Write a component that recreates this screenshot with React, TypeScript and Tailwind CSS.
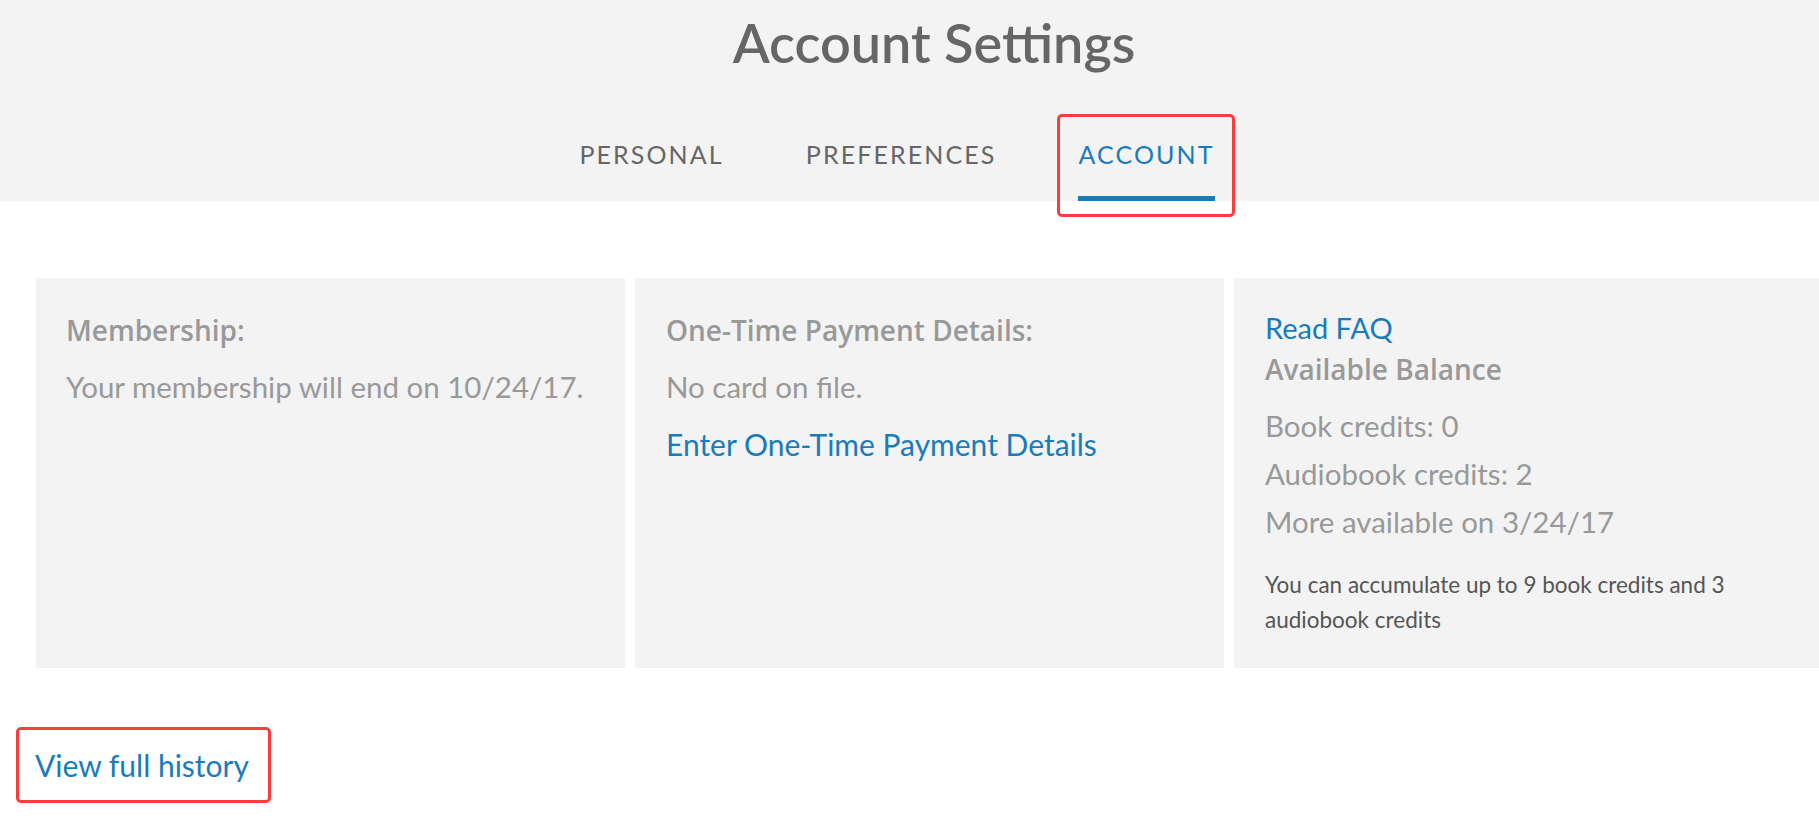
const font = { fontFamily: "Lato, 'Open Sans', sans-serif" };
const headFont = { fontFamily: "'Open Sans', Lato, sans-serif" };

function Tab({ label, active }: { label: string; active?: boolean }) {
  return (
    <div className="relative mr-[82px]">
      <div
        className={
          "pb-[26px] text-[25px] leading-[32px] tracking-[2.1px] border-b-[5px] " +
          (active ? "border-[#1a7bb9] text-[#1a7bb9]" : "border-transparent text-[#666]")
        }
      >
        {label}
      </div>
      {active && (
        <div className="pointer-events-none absolute -top-[24px] -bottom-[16px] -left-[21px] -right-[20px] rounded-[5px] border-[3px] border-[#fb3c3c]" />
      )}
    </div>
  );
}

function Heading({ children, className = "" }: { children: React.ReactNode; className?: string }) {
  return (
    <h2 className={"text-[28px] font-semibold text-[#999] " + className} style={headFont}>
      {children}
    </h2>
  );
}

export default function App() {
  return (
    <div className="min-h-screen w-full overflow-hidden bg-white" style={font}>
      <div className="bg-[#f3f3f3]">
        <div className="w-[1868px]">
          <h1 className="pt-[12px] text-center text-[54px] leading-[62px] font-semibold text-[#666]">
            Account Settings
          </h1>
          <div className="mt-[64px] flex justify-center pl-[8px]">
            <Tab label="PERSONAL" />
            <Tab label="PREFERENCES" />
            <Tab label="ACCOUNT" active />
          </div>
        </div>
      </div>

      <div className="w-[1859px] px-[36px]">
        <div className="mt-[77px] grid grid-cols-3 gap-[10px]">
          <div className="h-[390px] bg-[#f3f3f3] px-[30px] pt-[30px]">
            <Heading className="leading-[44px]">Membership:</Heading>
            <p className="mt-[11px] text-[29.5px] leading-[48px] text-[#999]">
              Your membership will end on 10/24/17.
            </p>
          </div>

          <div className="h-[390px] bg-[#f3f3f3] px-[31px] pt-[30px]">
            <Heading className="leading-[44px]">One-Time Payment Details:</Heading>
            <p className="mt-[11px] text-[29.5px] leading-[48px] text-[#999]">No card on file.</p>
            <a href="#" className="mt-[9px] block text-[30px] leading-[48px] text-[#1a7bb9]">
              Enter One-Time Payment Details
            </a>
          </div>

          <div className="h-[390px] bg-[#f3f3f3] px-[31px] pt-[30px]">
            <a href="#" className="block text-[29px] leading-[40px] text-[#1a7bb9]">
              Read FAQ
            </a>
            <Heading className="mt-[1px] leading-[40px]">Available Balance</Heading>
            <div className="mt-[13px] text-[29.5px] leading-[48px] text-[#999]">
              <p>Book credits: 0</p>
              <p>Audiobook credits: 2</p>
              <p>More available on 3/24/17</p>
            </div>
            <p className="mt-[21px] text-[22.5px] leading-[35px] text-[#555]">
              You can accumulate up to 9 book credits and 3 audiobook credits
            </p>
          </div>
        </div>

        <div className="mt-[73px] -ml-[1px]">
          <a href="#" className="relative inline-block text-[30px] leading-[48px] text-[#1a7bb9]">
            View full history
            <span className="pointer-events-none absolute -top-[14px] -bottom-[14px] -left-[19px] -right-[22px] rounded-[5px] border-[3px] border-[#fb3c3c]" />
          </a>
        </div>
      </div>
    </div>
  );
}
